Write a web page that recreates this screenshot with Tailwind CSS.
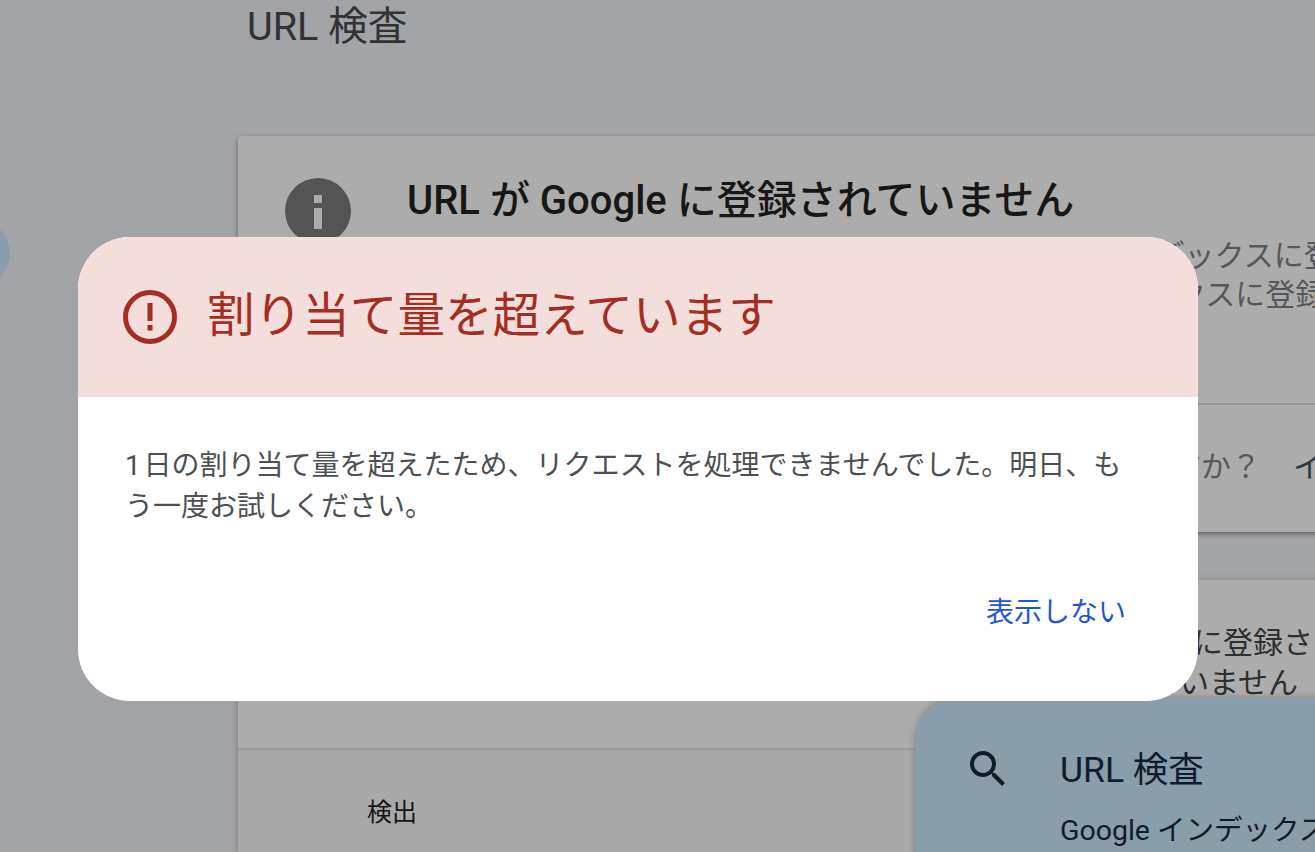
<!DOCTYPE html>
<html lang="ja">
<head>
<meta charset="utf-8">
<script src="https://cdn.jsdelivr.net/npm/@tailwindcss/browser@4"></script>
</head>
<body class="m-0 bg-[#a2a3a7] font-['Roboto','Noto_Sans_CJK_JP',sans-serif]">
<div class="relative w-[1315px] h-[852px] overflow-hidden bg-[#a2a3a7]">
  <div class="absolute left-[-56px] top-[220px] w-[66px] h-[66px] rounded-full bg-[#8a9daa]"></div>

  <main class="ml-[238px] w-[1200px] flex flex-col">
    <h1 class="ml-[9px] mt-[4px] h-[132px] text-[39.6px] leading-[46px] font-normal text-[#303235] whitespace-nowrap">URL 検査</h1>

    <section class="h-[396px] bg-[#acacac] rounded-t-[4px] shadow-[0_2px_5px_rgba(50,52,56,0.6)] flex flex-col">
      <div class="h-[267px] flex pl-[47px] pt-[42px]">
        <svg class="w-[66px] h-[66px] shrink-0" viewBox="0 0 66 66">
          <circle cx="33" cy="33" r="33" fill="#545454"/>
          <rect x="29" y="17" width="8" height="8" fill="#acacac"/>
          <rect x="29" y="30" width="8" height="21" fill="#acacac"/>
        </svg>
        <div class="ml-[56px] flex flex-col">
          <h2 class="text-[40px] leading-[46px] font-medium text-[#171717] whitespace-nowrap">URL が Google に登録されていません</h2>
          <p class="mt-[12px] text-[30px] leading-[39px] text-[#55585b] whitespace-nowrap">当ページはインデックスに登録されていないため、インデックスに登録</p>
          <p class="ml-[20px] text-[30px] leading-[39px] text-[#55585b] whitespace-nowrap">このページは現在も未登録のままであるため、インデックスに登録</p>
        </div>
      </div>
      <div class="h-[129px] border-t-2 border-[#97989a] flex items-center pl-[640px] pb-[5px] gap-[32px] text-[30px] whitespace-nowrap">
        <span class="w-[383px] shrink-0 text-right text-[#55585b]">登録されていますか？</span>
        <span class="shrink-0 text-[#2c3a46]">インデックス</span>
      </div>
    </section>

    <section class="mt-[48px] h-[272px] bg-[#acacac] shadow-[0_1px_6px_rgba(60,64,67,0.45)] flex flex-col">
      <div class="h-[168px] pt-[43px] pr-[125px] flex flex-col items-end text-[30px] leading-[40px] text-[#2e2f31] whitespace-nowrap">
        <p>URL が Google に登録さ</p>
        <p class="mr-[15px]">登録されていません</p>
      </div>
      <div class="flex-1 border-t-2 border-[#97989a] bg-[#a8a8a8] pl-[129px] pt-[46px]">
        <span class="text-[25px] leading-[34px] text-[#161616]">検出</span>
      </div>
    </section>
  </main>

  <aside class="absolute left-[915px] top-[698px] w-[500px] h-[200px] rounded-tl-[42px] bg-[#8a9daa] shadow-[0_0_6px_rgba(60,64,67,0.4)] text-[#0e1c2b] flex pl-[50px] pt-[50px]">
    <svg class="w-[48px] h-[48px] shrink-0 -mt-[3px] -ml-[1px]" viewBox="0 0 24 24" fill="#0e1c2b">
      <path d="M15.5 14h-.79l-.28-.27A6.47 6.47 0 0 0 16 9.5 6.5 6.5 0 1 0 9.5 16c1.61 0 3.09-.59 4.23-1.57l.27.28v.79l5 4.99L20.49 19l-4.99-5zm-6 0C7.01 14 5 11.99 5 9.5S7.01 5 9.5 5 14 7.01 14 9.5 11.99 14 9.5 14z"/>
    </svg>
    <div class="ml-[48px] flex flex-col whitespace-nowrap">
      <span class="text-[35.5px] leading-[44px]">URL 検査</span>
      <span class="mt-[21px] text-[28.5px] leading-[36px]">Google インデックス</span>
    </div>
  </aside>

  <div role="dialog" class="absolute left-[78px] top-[237px] w-[1120px] h-[464px] rounded-[52px] bg-white overflow-hidden flex flex-col">
    <header class="h-[160px] shrink-0 bg-[#f4dedc] flex items-center pl-[45px] text-[#a52e23]">
      <svg class="w-[54px] h-[54px] shrink-0" viewBox="0 0 54 54">
        <circle cx="27" cy="27" r="24.5" fill="none" stroke="#a52e23" stroke-width="5"/>
        <rect x="24.5" y="13" width="5" height="18" fill="#a52e23"/>
        <rect x="24.5" y="35" width="5" height="5.5" fill="#a52e23"/>
      </svg>
      <h3 class="ml-[30px] text-[47.6px] leading-[60px] font-normal whitespace-nowrap -mt-[2px]">割り当て量を超えています</h3>
    </header>
    <p class="mt-[48px] ml-[47px] mr-[72px] text-[28px] leading-[41px] text-[#4d4f52] font-normal">1&#8202;日の割り当て量を超えたため、リクエストを処理できませんでした。明日、もう一度お試しください。</p>
    <div class="mt-[66px] flex justify-end pr-[72px]">
      <button class="text-[28px] leading-[40px] text-[#1f57d0] font-normal">表示しない</button>
    </div>
  </div>
</div>
</body>
</html>
